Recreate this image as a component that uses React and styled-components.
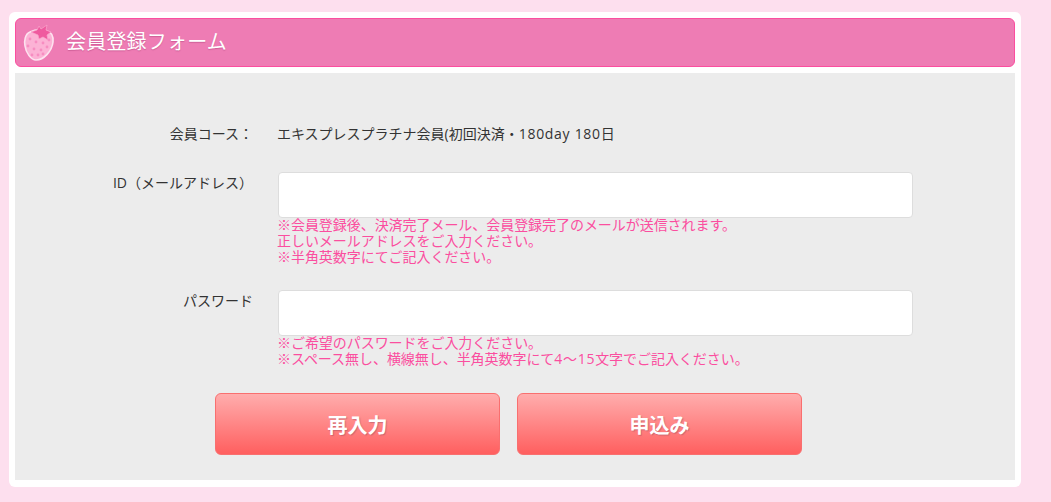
import React from "react";
import styled, { createGlobalStyle } from "styled-components";

const GlobalStyle = createGlobalStyle`
  html, body {
    margin: 0;
    padding: 0;
    background: #fddfee;
    font-family: "Open Sans", "Noto Sans CJK JP", sans-serif;
  }
`;

const Strawberry = () => (
  <svg width="36" height="40" viewBox="0 0 36 40">
    <path
      d="M8 9C3 11 2 18 3 23c1 7 6 14 11 14 8 0 16-9 17-18 .5-6-2-10-6-11-6-2-13-1-17 1z"
      fill="#fcb2d5"
      stroke="#fde2ef"
      strokeWidth="1.6"
    />
    <path
      d="M9 9l6-2 2-4 2 3 6-4-1 5 5 2-4 3 1 5-5-3-4 2-1-4z"
      fill="#ef5a9f"
      stroke="#f9a6cd"
      strokeWidth=".7"
    />
    {[
      [8, 16], [14, 19], [21, 20], [27, 17], [6, 23], [12, 26],
      [19, 27], [25, 24], [10, 32], [16, 32], [21, 31],
    ].map(([cx, cy]) => (
      <circle key={`${cx}-${cy}`} cx={cx} cy={cy} r="1.4" fill="#f78dc1" />
    ))}
  </svg>
);

export default function App() {
  return (
    <Page>
      <GlobalStyle />
      <Card>
        <Header>
          <Icon>
            <Strawberry />
          </Icon>
          <Title>会員登録フォーム</Title>
        </Header>
        <Body>
          <CourseRow>
            <Label>会員コース：</Label>
            <Value>
              エキスプレスプラチナ会員(初回決済・<Latin>180day 180</Latin>日
            </Value>
          </CourseRow>
          <Row>
            <FieldLabel>ID（メールアドレス）</FieldLabel>
            <Field>
              <Input type="text" />
              <Note>
                ※会員登録後、決済完了メール、会員登録完了のメールが送信されます。
                <br />
                正しいメールアドレスをご入力ください。
                <br />
                ※半角英数字にてご記入ください。
              </Note>
            </Field>
          </Row>
          <PasswordRow>
            <FieldLabel>パスワード</FieldLabel>
            <Field>
              <Input type="password" />
              <Note>
                ※ご希望のパスワードをご入力ください。
                <br />
                ※スペース無し、横線無し、半角英数字にて<Latin>4～15</Latin>文字でご記入ください。
              </Note>
            </Field>
          </PasswordRow>
          <Buttons>
            <Button type="button">再入力</Button>
            <Button type="button">申込み</Button>
          </Buttons>
        </Body>
      </Card>
    </Page>
  );
}

const Page = styled.div`
  height: 502px;
  padding: 12px 30px 0 9px;
  box-sizing: border-box;
  overflow: hidden;
`;

const Card = styled.div`
  width: 1012px;
  height: 475px;
  box-sizing: border-box;
  padding: 6px;
  background: #fff;
  border-radius: 6px;
  display: flex;
  flex-direction: column;
  gap: 6px;
`;

const Header = styled.div`
  height: 49px;
  box-sizing: border-box;
  display: flex;
  align-items: center;
  background: #ee7cb4;
  border: 1px solid #fb4e9f;
  border-radius: 6px;
`;

const Icon = styled.div`
  width: 36px;
  height: 40px;
  margin-left: 6px;
  margin-right: 8px;
`;

const Title = styled.h1`
  margin: 0 0 2px;
  font-size: 20px;
  font-weight: 400;
  letter-spacing: 0.2px;
  line-height: 1;
  color: #fff;
  text-shadow: 0 1px 1px rgba(150, 40, 100, 0.35);
`;

const Body = styled.div`
  height: 407px;
  background: #ececec;
  box-sizing: border-box;
  padding-top: 51px;
`;

const Row = styled.div`
  display: grid;
  grid-template-columns: 238px 635px;
  column-gap: 25px;
`;

const CourseRow = styled(Row)`
  height: 20px;
  align-items: center;
  margin-bottom: 28px;
`;

const PasswordRow = styled(Row)`
  margin-top: 25px;
`;

const Label = styled.div`
  font-size: 14px;
  line-height: 20px;
  color: #333;
  text-align: right;
`;

const FieldLabel = styled(Label)`
  padding-top: 1px;
`;

const Value = styled.div`
  margin-left: -1px;
  font-size: 14px;
  line-height: 20px;
  color: #333;
`;

const Latin = styled.span`
  letter-spacing: 0.7px;
`;

const Field = styled.div`
  display: flex;
  flex-direction: column;
`;

const Input = styled.input`
  width: 635px;
  height: 46px;
  box-sizing: border-box;
  background: #fff;
  border: 1px solid #ddd;
  border-radius: 4px;
  outline: none;
`;

const Note = styled.p`
  margin: -1px 0 0 -1px;
  font-size: 14px;
  letter-spacing: -0.05px;
  line-height: 16px;
  color: #fb4e9f;
`;

const Buttons = styled.div`
  display: flex;
  gap: 17px;
  margin-top: 26px;
  padding-left: 200px;
`;

const Button = styled.button`
  width: 285px;
  height: 62px;
  border: 1px solid #f96f6f;
  border-radius: 6px;
  background: linear-gradient(#ffadad, #ff5f5f);
  color: #fff;
  font-family: inherit;
  font-size: 20px;
  font-weight: 700;
  text-shadow: 1px 1px 1px rgba(120, 60, 90, 0.35);
  cursor: pointer;
`;
